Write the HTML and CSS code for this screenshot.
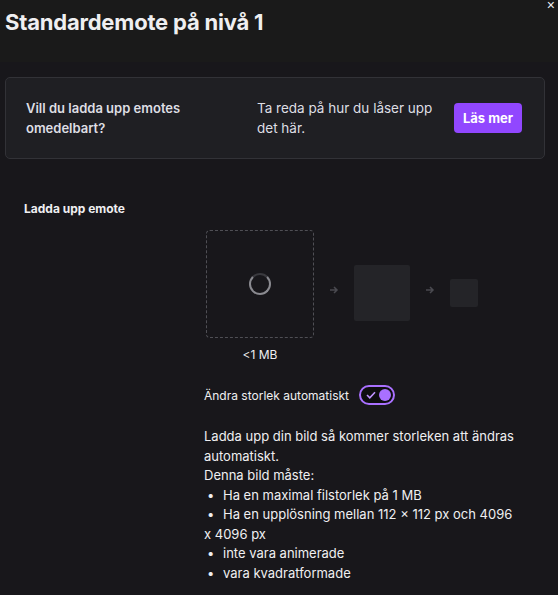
FILE: index.html
```html
<!DOCTYPE html>
<html lang="sv">
<head>
  <meta charset="UTF-8">
  <meta name="viewport" content="width=device-width, initial-scale=1.0">
  <title>Standardemote</title>
  <link rel="stylesheet" href="styles.css">
</head>
<body>
  <header class="modal-header">
    <h1>Standardemote på nivå 1</h1>
    <button class="close-btn" aria-label="Stäng">×</button>
  </header>

  <div class="promo">
    <div class="promo-title">Vill du ladda upp emotes omedelbart?</div>
    <div class="promo-text">Ta reda på hur du låser upp det här.</div>
    <button class="promo-btn">Läs mer</button>
  </div>

  <section class="upload">
    <div class="upload-label">Ladda upp emote</div>
    <div class="upload-body">
      <div class="preview-row">
        <div class="drop-col">
          <div class="drop-zone">
            <div class="spinner"></div>
          </div>
          <div class="size-note">&lt;1 MB</div>
        </div>
        <span class="arrow">
          <svg width="10" height="10" viewBox="0 0 10 10"><path d="M1 5h7M5 2l3 3-3 3" fill="none" stroke="#4a4a50" stroke-width="1.5"/></svg>
        </span>
        <div class="preview preview-md"></div>
        <span class="arrow">
          <svg width="10" height="10" viewBox="0 0 10 10"><path d="M1 5h7M5 2l3 3-3 3" fill="none" stroke="#4a4a50" stroke-width="1.5"/></svg>
        </span>
        <div class="preview preview-sm"></div>
      </div>

      <div class="toggle-row">
        <span>Ändra storlek automatiskt</span>
        <span class="toggle">
          <svg class="check" width="10" height="8" viewBox="0 0 10 8"><path d="M1 4l2.8 2.8L9 1.2" fill="none" stroke="#bf94ff" stroke-width="1.6"/></svg>
          <span class="knob"></span>
        </span>
      </div>

      <p class="rules">
        Ladda upp din bild så kommer storleken att ändras automatiskt.<br>
        Denna bild måste:<br>
        <span class="dot">•</span>Ha en maximal filstorlek på 1 MB<br>
        <span class="dot">•</span>Ha en upplösning mellan 112 × 112 px och 4096 x 4096 px<br>
        <span class="dot">•</span>inte vara animerade<br>
        <span class="dot">•</span>vara kvadratformade
      </p>
    </div>
  </section>
</body>
</html>
```

FILE: styles.css
```css
body {
  margin: 0;
  background-color: #18171b;
  color: #efeff1;
  font-family: Inter, "Noto Sans", sans-serif;
  font-size: 13px;
  width: 558px;
  height: 595px;
  overflow: hidden;
}
.modal-header {
  background-color: #1a1a1a;
  height: 62px;
  padding: 0 3px 0 5px;
  display: flex;
  justify-content: space-between;
  align-items: flex-start;
}
.modal-header h1 {
  margin: 9px 0 0;
  font-size: 22px;
  font-weight: 700;
  letter-spacing: -0.2px;
  color: #efeff1;
}
.close-btn {
  background: none;
  border: none;
  color: #efeff1;
  font-size: 14px;
  line-height: 1;
  padding: 0;
  margin: -2px 0 0 0;
  cursor: pointer;
}
/* info card */
.promo {
  margin: 15px 13px 0 5px;
  background-color: #1f1f23;
  border: 1px solid #323237;
  border-radius: 5px;
  height: 80px;
  padding: 0 21px 0 20px;
  display: flex;
  align-items: center;
}
.promo-title {
  width: 231px;
  font-weight: 600;
  line-height: 20px;
  color: #dedee3;
}
.promo-text {
  width: 197px;
  line-height: 20px;
  color: #dedee3;
  font-size: 13.5px;
}
.promo-btn {
  background-color: #9147ff;
  color: #fff;
  border: none;
  border-radius: 4px;
  font-family: inherit;
  font-weight: 700;
  font-size: 13px;
  width: 68px;
  height: 30px;
  cursor: pointer;
}
/* upload section */
.upload {
  display: flex;
  padding: 42px 0 0 24px;
}
.upload-label {
  width: 180px;
  font-weight: 700;
  font-size: 12px;
  color: #efeff1;
}
.upload-body {
  width: 318px;
  padding-top: 29px;
}
.preview-row {
  display: flex;
  align-items: flex-start;
}
.drop-col {
  margin-left: 2px;
  display: flex;
  flex-direction: column;
  align-items: center;
}
.drop-zone {
  width: 106px;
  height: 106px;
  border: 1.5px dashed #4f4f55;
  border-radius: 4px;
  display: flex;
  align-items: center;
  justify-content: center;
}
.spinner {
  width: 18px;
  height: 18px;
  border: 2px solid #8a8a90;
  border-top-color: #3a3a3f;
  border-radius: 50%;
}
.size-note {
  margin-top: 9px;
  font-size: 12px;
  color: #efeff1;
}
.arrow {
  margin-top: 55px;
  width: 40px;
  display: flex;
  justify-content: center;
}
.preview {
  background-color: #242428;
  border-radius: 2px;
}
.preview-md {
  width: 56px;
  height: 56px;
  margin-top: 35px;
}
.preview-sm {
  width: 28px;
  height: 28px;
  margin-top: 49px;
}
.toggle-row {
  margin-top: 23px;
  display: flex;
  align-items: center;
  gap: 10px;
  font-size: 12px;
}
.toggle {
  box-sizing: border-box;
  width: 36px;
  height: 20px;
  border: 2px solid #a970ff;
  border-radius: 10px;
  background-color: #0e0e10;
  display: flex;
  align-items: center;
  justify-content: space-between;
  padding: 0 2px 0 5px;
}
.knob {
  width: 12px;
  height: 12px;
  border-radius: 50%;
  background-color: #a970ff;
}
.rules {
  margin: 22px 0 0;
  line-height: 19.5px;
  color: #efeff1;
}
.dot {
  display: inline-block;
  width: 16px;
  padding-left: 3px;
}
```
